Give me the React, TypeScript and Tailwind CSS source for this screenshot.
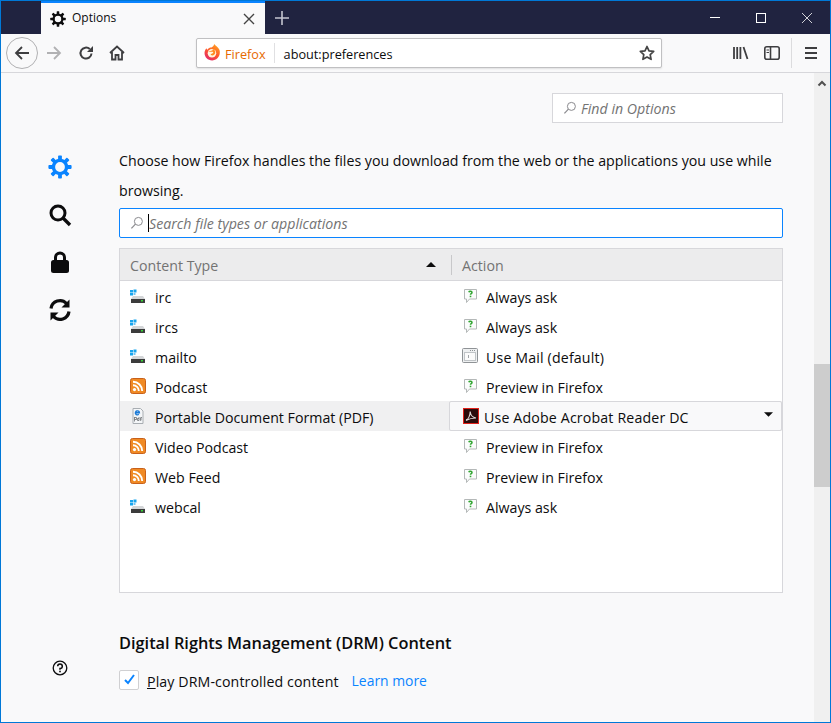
import React from "react";

const font = { fontFamily: '"Open Sans", sans-serif' };

function Gear({ c, s }: { c: string; s: number }) {
  const teeth = [0, 45, 90, 135, 180, 225, 270, 315];
  return (
    <svg width={s} height={s} viewBox="0 0 24 24">
      {teeth.map((a) => (
        <rect key={a} x="10.1" y="0.4" width="3.8" height="6" rx="0.8" fill={c} transform={`rotate(${a} 12 12)`} />
      ))}
      <circle cx="12" cy="12" r="6.6" fill="none" stroke={c} strokeWidth="3.4" />
    </svg>
  );
}

function Bubble() {
  return (
    <svg width="15" height="16" viewBox="0 0 15 16" className="shrink-0">
      <path d="M1.500 1.500h12v9.500H6.500L3.500 14.500V11h-2z" fill="#fbfcfc" stroke="#b4b8b8" strokeWidth="1" />
      <path d="M5.800 4.200c.4-1.200 3.200-1.200 3.200.4 0 1.100-1.500 1.100-1.500 2.200" fill="none" stroke="#2fa52f" strokeWidth="1.500" />
      <rect x="6.700" y="7.700" width="1.600" height="1.500" fill="#2fa52f" />
    </svg>
  );
}

function Rss() {
  return (
    <svg width="16" height="16" viewBox="0 0 16 16" className="shrink-0">
      <rect x="0.500" y="0.500" width="15" height="15" rx="2" fill="#f08a24" stroke="#c8601a" />
      <circle cx="4.500" cy="11.600" r="1.600" fill="#fff" />
      <path d="M3 7.200a5.800 5.800 0 0 1 5.800 5.800M3 3.800a9.200 9.200 0 0 1 9.200 9.200" fill="none" stroke="#fff" strokeWidth="1.900" />
    </svg>
  );
}

function Drive() {
  return (
    <svg width="16" height="16" viewBox="0 -1 16 16" className="shrink-0">
      <rect x="0" y="1" width="3" height="2.500" fill="#19a5ee" />
      <rect x="3.500" y="0.500" width="3" height="3" fill="#19a5ee" />
      <rect x="0" y="4" width="3" height="2.500" fill="#19a5ee" />
      <rect x="3.500" y="4" width="2" height="2" fill="#6cc6f5" />
      <path d="M3 7h10l2 3H1z" fill="#d4d6d8" />
      <rect x="1" y="10" width="14" height="4" fill="#3c3c3c" />
      <rect x="11" y="11" width="2" height="1.500" fill="#37d337" />
    </svg>
  );
}

function PdfDoc() {
  return (
    <svg width="16" height="16" viewBox="0 0 16 16" className="shrink-0">
      <path d="M3 0.500h7.500l2.500 2.500v12.500H3z" fill="#f4f6f8" stroke="#a8adb2" />
      <path d="M5.600 4.700h3.800A2 2 0 1 0 8.800 6.300" fill="none" stroke="#1c7ad6" strokeWidth="1.400" />
      <path d="M4.500 9v4.500M4.500 9.500h2v2h-2M9 9v3.500H7.500v-2H9M10.700 13V9.500h1.300M10 11h1.800" fill="none" stroke="#6c6f72" strokeWidth="0.800" />
    </svg>
  );
}

function MailApp() {
  return (
    <svg width="16" height="16" viewBox="0 0 16 16" className="-ml-px shrink-0">
      <rect x="0.500" y="0.500" width="15" height="14" rx="1" fill="#eef0f1" stroke="#8f9396" />
      <path d="M8 2.500h6" stroke="#8f9396" strokeDasharray="1 1" />
      <rect x="2.500" y="4.500" width="11" height="8" fill="#fbfbfb" stroke="#c0c4c7" />
      <path d="M6.500 7v3" stroke="#a0a4a7" />
    </svg>
  );
}

function Acrobat() {
  return (
    <svg width="16" height="16" viewBox="0 0 16 16" className="shrink-0">
      <rect x="0.500" y="0.500" width="15" height="15" fill="#2b0a0a" stroke="#e0201a" />
      <path d="M3 12.500c2.500-1.500 4-5 4.200-9 .3 3.500 2.500 6 5.800 6.500-3.500 0-7 .8-10 2.500z" fill="none" stroke="#d9d2d2" strokeWidth="1.100" />
    </svg>
  );
}

function SearchSmall() {
  return (
    <svg width="14" height="14" viewBox="0 0 14 14" className="shrink-0">
      <circle cx="8.400" cy="5.400" r="4" fill="none" stroke="#8a8a8e" strokeWidth="1" />
      <path d="M5.400 8.200L1.400 12.400" stroke="#8a8a8e" strokeWidth="1.200" />
    </svg>
  );
}

function FirefoxLogo() {
  return (
    <svg width="17" height="17" viewBox="0 0 16 16" className="shrink-0">
      <defs>
        <linearGradient id="ff" x1="0.800" y1="0" x2="0.200" y2="1">
          <stop offset="0" stopColor="#ffa51f" />
          <stop offset="0.500" stopColor="#ff5a2b" />
          <stop offset="1" stopColor="#e0246e" />
        </linearGradient>
      </defs>
      <path d="M9.500 0c1.200 1.600 4 2.800 5 5.500 1.400 3.800-.8 10-6.800 10C3.500 15.500.5 12.300.5 8.500.5 6.800 1.200 5.200 2.300 4c.2.800.5 1.200 1 1.500C4 3.800 5.500 3.300 7 3.300 8.500 2.300 9.500 1.500 9.500 0z" fill="url(#ff)" />
      <circle cx="7.500" cy="8.800" r="4" fill="#fff6e0" />
      <path d="M3.800 7.300h4.400c.6 0 .6.800.2 1.200-.7.700-1.700.7-2.200 1.500 1.500 1.500 3.800.7 4.300-1.500.4-1.800-.6-3.400-2.300-4.100.6 2-.8 1.500-4.400 2.900z" fill="#ff8a1f" />
    </svg>
  );
}

type Row = { icon: React.ReactNode; name: string; action: React.ReactNode; label: string; selected?: boolean };

const rows: Row[] = [
  { icon: <Drive />, name: "irc", action: <Bubble />, label: "Always ask" },
  { icon: <Drive />, name: "ircs", action: <Bubble />, label: "Always ask" },
  { icon: <Drive />, name: "mailto", action: <MailApp />, label: "Use Mail (default)" },
  { icon: <Rss />, name: "Podcast", action: <Bubble />, label: "Preview in Firefox" },
  { icon: <PdfDoc />, name: "Portable Document Format (PDF)", action: <Acrobat />, label: "Use Adobe Acrobat Reader DC", selected: true },
  { icon: <Rss />, name: "Video Podcast", action: <Bubble />, label: "Preview in Firefox" },
  { icon: <Rss />, name: "Web Feed", action: <Bubble />, label: "Preview in Firefox" },
  { icon: <Drive />, name: "webcal", action: <Bubble />, label: "Always ask" },
];

function TableRow({ r }: { r: Row }) {
  const wide = r.label.startsWith("Use");
  return (
    <div className={`flex h-[30px] items-center ${r.selected ? "bg-[#f0f0f1]" : ""}`}>
      <div className="flex w-[329px] items-center gap-[9px] pl-[10px]">
        {r.icon}
        <span className="whitespace-nowrap pt-[4px]">{r.name}</span>
      </div>
      {r.selected ? (
        <div className="flex h-[30px] flex-1 items-center gap-[5px] rounded-[2px] border border-[#d7d7db] bg-[#f9f9fa] pl-[13px] pr-[8px]">
          {r.action}
          <span className="flex-1 whitespace-nowrap pt-[4px] tracking-[0.15px]">{r.label}</span>
          <svg width="9" height="5" viewBox="0 0 10 5" className="mb-[3px]"><path d="M0 0h10L5 5z" fill="#0c0c0d" /></svg>
        </div>
      ) : (
        <div className="flex flex-1 items-center gap-[8px] pl-[14px]">
          {r.action}
          <span className={`whitespace-nowrap pt-[4px] ${wide ? "tracking-[0.15px]" : ""}`}>{r.label}</span>
        </div>
      )}
    </div>
  );
}

export default function App() {
  return (
    <div style={font} className="flex h-[723px] w-[831px] flex-col overflow-hidden border border-[#0078d7] bg-[#f9f9fa] text-[14.2px] text-[#0c0c0d]">
      {/* title bar */}
      <div className="flex h-[33px] shrink-0 bg-[#202340]">
        <div className="w-[40px]" />
        <div className="flex w-[224px] items-center border-t-2 border-[#0a84ff] bg-[#f9f9fa] pl-[9px] pr-[10px]">
          <Gear c="#0c0c0d" s={16} />
          <span className="ml-[6px] flex-1 pb-[2px] text-[12px] text-[#0c0c0d]">Options</span>
          <svg width="12" height="12" viewBox="0 0 12 12"><path d="M1 1l10 10M11 1L1 11" stroke="#444" strokeWidth="1.400" /></svg>
        </div>
        <div className="flex w-[34px] items-center justify-center">
          <svg width="14" height="14" viewBox="0 0 14 14"><path d="M7 0v14M0 7h14" stroke="#c4c5cf" strokeWidth="1.600" /></svg>
        </div>
        <div className="flex-1" />
        <div className="flex items-center text-white">
          <div className="flex w-[46px] justify-center"><div className="h-px w-[10px] bg-white" /></div>
          <div className="flex w-[46px] justify-center"><div className="h-[10px] w-[10px] border border-white" /></div>
          <div className="flex w-[46px] justify-center">
            <svg width="10" height="10" viewBox="0 0 10 10"><path d="M0 0l10 10M10 0L0 10" stroke="#fff" strokeWidth="0.800" /></svg>
          </div>
        </div>
      </div>

      {/* toolbar */}
      <div className="flex h-[39px] shrink-0 items-center border-b border-[#d7d7db] bg-[#f9f9fa] pb-px">
        <div className="ml-[5px] flex h-[32px] w-[32px] items-center justify-center rounded-full border border-[#b1b1b3] bg-[#f9f9fa]">
          <svg width="16" height="16" viewBox="0 0 16 16"><path d="M15 8H2M8 2L2 8l6 6" fill="none" stroke="#3e3e40" strokeWidth="1.800" /></svg>
        </div>
        <div className="ml-[8px] flex w-[16px] justify-center">
          <svg width="16" height="16" viewBox="0 0 16 16"><path d="M1 8h13M8 2l6 6-6 6" fill="none" stroke="#b1b1b3" strokeWidth="1.800" /></svg>
        </div>
        <div className="ml-[16px] flex w-[16px] justify-center">
          <svg width="16" height="16" viewBox="0 0 16 16"><path d="M13.500 8.500a5.500 5.500 0 1 1-1.700-4.400" fill="none" stroke="#3e3e40" strokeWidth="2" /><path d="M15 1v6H9z" fill="#3e3e40" /></svg>
        </div>
        <div className="ml-[15px] flex w-[16px] justify-center">
          <svg width="16" height="16" viewBox="0 0 16 16"><path d="M1 8l7-6.500L15 8M3 7v7.500h3.500V10h3v4.500H13V7" fill="none" stroke="#3e3e40" strokeWidth="1.800" /></svg>
        </div>
        <div className="ml-[71px] flex h-[30px] w-[466px] items-center rounded-[2px] border border-[#c0c0c2] bg-white shadow-[0_1px_2px_rgba(0,0,0,0.1)]">
          <div className="ml-[7px]"><FirefoxLogo /></div>
          <span className="ml-[4px] pt-[4px] text-[12.7px] text-[#e66a00]">Firefox</span>
          <div className="ml-[8px] h-[20px] w-px bg-[#e0e0e2]" />
          <span className="ml-[9px] flex-1 pt-[4px] text-[12.7px] text-[#0c0c0d]">about:preferences</span>
          <svg width="16" height="16" viewBox="0 0 16 16" className="mr-[6px]"><path d="M8 1.500l2 4.300 4.700.6-3.500 3.200.9 4.700L8 12l-4.100 2.300.9-4.700L1.300 6.400 6 5.800z" fill="none" stroke="#444" strokeWidth="1.700" strokeLinejoin="round" /></svg>
        </div>
        <div className="ml-[71px]">
          <svg width="16" height="14" viewBox="0 0 16 14"><path d="M1 1v12M4.200 1v12M7.400 1v12M10.500 1l4 12" stroke="#3e3e40" strokeWidth="1.800" fill="none" /></svg>
        </div>
        <div className="ml-[15px]">
          <svg width="16" height="14" viewBox="0 0 16 14"><rect x="0.800" y="0.800" width="14.400" height="12.400" rx="2" fill="none" stroke="#3e3e40" strokeWidth="1.600" /><path d="M6.500 1v12" stroke="#3e3e40" strokeWidth="1.600" /><path d="M2.500 4h2.500M2.500 6.500h2.500" stroke="#3e3e40" /></svg>
        </div>
        <div className="ml-[11px] h-[30px] w-px bg-[#dcdcde]" />
        <div className="ml-[13px]">
          <svg width="12" height="12" viewBox="0 0 12 12"><path d="M0 1h12M0 6h12M0 11h12" stroke="#3e3e40" strokeWidth="1.800" /></svg>
        </div>
      </div>

      {/* content */}
      <div className="flex min-h-0 flex-1">
        {/* sidebar */}
        <div className="flex w-[118px] shrink-0 flex-col items-center">
          <div className="flex w-[24px] flex-col items-center pt-[82px]">
            <Gear c="#0a84ff" s={24} />
            <div className="mt-[24px]">
              <svg width="24" height="24" viewBox="0 0 24 24"><circle cx="10" cy="10" r="7" fill="none" stroke="#0c0c0d" strokeWidth="3" /><path d="M15 15l7 7" stroke="#0c0c0d" strokeWidth="3.400" /></svg>
            </div>
            <div className="mt-[23px]">
              <svg width="24" height="24" viewBox="0 0 24 24"><rect x="3" y="10" width="18" height="13" rx="2.500" fill="#0c0c0d" /><path d="M7.500 11V7.500a4.500 4.500 0 0 1 9 0V11" fill="none" stroke="#0c0c0d" strokeWidth="3" /></svg>
            </div>
            <div className="mt-[24px]">
              <svg width="24" height="24" viewBox="0 0 24 24"><path d="M3 10.500A9 9 0 0 1 18.500 5.500M21 13.500A9 9 0 0 1 5.500 18.500" fill="none" stroke="#0c0c0d" strokeWidth="3.200" /><path d="M21.500 1.500v8h-8zM2.500 22.500v-8h8z" fill="#0c0c0d" /></svg>
            </div>
            <div className="mt-[338px]">
              <svg width="16" height="16" viewBox="0 0 16 16"><circle cx="8" cy="8" r="6.800" fill="none" stroke="#0c0c0d" strokeWidth="1.300" /><path d="M5.700 6.200A2.300 2.300 0 1 1 8 8.500v1.300" fill="none" stroke="#0c0c0d" strokeWidth="1.500" /><rect x="7.200" y="10.700" width="1.600" height="1.600" fill="#0c0c0d" /></svg>
            </div>
          </div>
        </div>

        {/* main */}
        <div className="flex min-w-0 flex-1 flex-col pt-[20px]">
          <div className="flex justify-end pr-[31px]">
            <div className="flex h-[30px] w-[231px] items-center border border-[#d7d7db] bg-white pl-[10px] text-[#737373]">
              <SearchSmall />
              <span className="ml-[4px] pt-[2px] italic">Find in Options</span>
            </div>
          </div>
          <div className="mt-[23px] w-[664px] leading-[30px]">
            Choose how Firefox handles the files you download from the web or the applications you use while browsing.
          </div>
          <div className="mt-[2px] flex h-[30px] w-[664px] items-center rounded-[2px] border border-[#0a84ff] bg-white pl-[10px] text-[#737373]">
            <SearchSmall />
            <span className="ml-[4px] h-[18px] w-px bg-black" />
            <span className="pt-[2px] italic">Search file types or applications</span>
          </div>
          <div className="mt-[10px] flex h-[345px] w-[664px] flex-col border border-[#d7d7db] bg-white">
            <div className="flex h-[32px] shrink-0 items-center border-b border-[#d7d7db] bg-[#ececed] text-[#737373]">
              <div className="flex w-[331px] items-center justify-between pl-[10px] pr-[15px]">
                <span className="pt-[2px]">Content Type</span>
                <svg width="10" height="5" viewBox="0 0 10 5"><path d="M0 5h10L5 0z" fill="#0c0c0d" /></svg>
              </div>
              <div className="h-[20px] w-px bg-[#c8c8ca]" />
              <span className="ml-[10px] pt-[2px]">Action</span>
            </div>
            <div>
              {rows.map((r) => (
                <TableRow key={r.name} r={r} />
              ))}
            </div>
          </div>
          <div className="mt-[37px] text-[16.35px] font-semibold leading-[26px]">Digital Rights Management (DRM) Content</div>
          <div className="mt-[11px] flex items-center">
            <div className="flex h-[20px] w-[20px] items-center justify-center rounded-[2px] border border-[#d0d0d2] bg-white">
              <svg width="11" height="11" viewBox="0 0 11 11"><path d="M1 6l3 3 6-8" fill="none" stroke="#0a84ff" strokeWidth="2" /></svg>
            </div>
            <span className="ml-[8px] pt-[4px] tracking-[0.1px]"><span className="underline">P</span>lay DRM-controlled content</span>
            <span className="ml-[13px] pt-[4px] text-[13.9px] text-[#0a84ff]">Learn more</span>
          </div>
        </div>

        {/* scrollbar */}
        <div className="relative w-[16px] shrink-0 bg-[#f0f0f0]">
          <svg width="16" height="16" viewBox="0 0 16 16" className="absolute left-0 top-[3px]"><path d="M4.500 9.500L8 6l3.500 3.500" fill="none" stroke="#505050" strokeWidth="2" /></svg>
          <div className="absolute left-0 top-[291px] h-[123px] w-[16px] bg-[#cdcdcd]" />
        </div>
      </div>
    </div>
  );
}
